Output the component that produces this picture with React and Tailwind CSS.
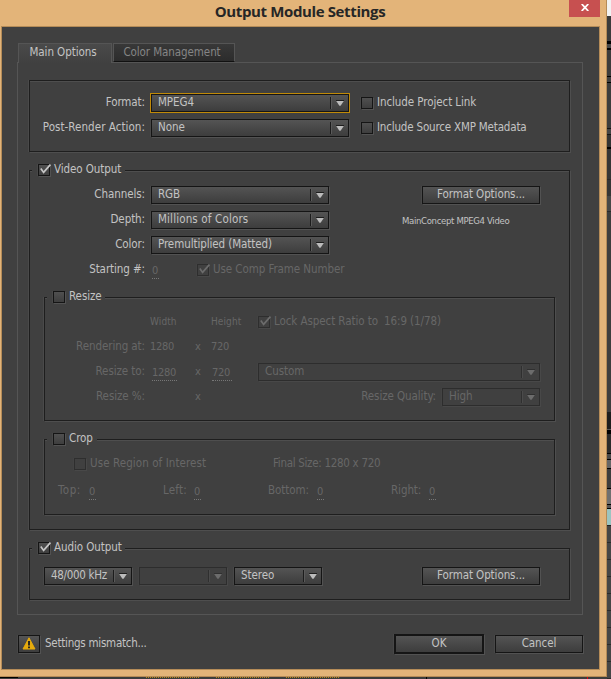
import React from "react"
import clsx from "clsx"

const bezel = "shadow-[1px_1px_0_#525252,-1px_0_0_#484848]"
const bezelOff = "shadow-[1px_1px_0_#484848,-1px_0_0_#434343]"

function Label({ className, children, disabled }) {
  return (
    <span className={clsx("shrink-0 pb-0.5 whitespace-pre", disabled ? "text-[#676767]" : "text-[#c3c3c3]", className)}>
      {children}
    </span>
  )
}

function Checkbox({ checked, disabled, className }) {
  return (
    <span
      className={clsx(
        "relative block h-3 w-3 shrink-0 border",
        disabled ? "border-[#2e2e2e] bg-[#404040]" : "border-[#151515] bg-linear-to-b from-[#505050] to-[#3e3e3e]",
        disabled ? bezelOff : bezel,
        className
      )}
    >
      {checked && (
        <svg viewBox="0 0 12 11" className="absolute -top-px left-0 h-[11px] w-3" fill="none">
          <path d="M1.8 4.6 L4.6 8.4 L11.4 0.6" stroke={disabled ? "#6c6c6c" : "#c6c6c6"} strokeWidth="1.7" />
        </svg>
      )}
    </span>
  )
}

function Select({ value, className, disabled, focused }) {
  return (
    <div
      className={clsx(
        "flex h-[18px] shrink-0 items-center border pl-1.5",
        disabled ? "border-[#2d2d2d] text-[#676767]" : "border-[#151515] bg-linear-to-b from-[#545454] to-[#3d3d3d] text-[#c3c3c3]",
        focused ? "shadow-[0_0_0_1px_#c08a08]" : disabled ? bezelOff : bezel,
        className
      )}
    >
      <span className="flex-1 pb-0.5 whitespace-pre">{value}</span>
      <span className={clsx("h-3 w-0.5 border-l", disabled ? "border-[#2f2f2f] bg-[#4b4b4b]" : "border-[#1c1c1c] bg-[#5a5a5a]")} />
      <svg viewBox="0 0 16 16" className="h-4 w-4 shrink-0">
        <path d="M4 5h8v1h-8z" fill={disabled ? "#303030" : "#1e1e1e"} />
        <path d="M4.2 6h7.6L8.6 10.8h-1.2z" fill={disabled ? "#6c6c6c" : "#bcbcbc"} />
      </svg>
    </div>
  )
}

function Button({ children, className }) {
  return (
    <button
      className={clsx(
        "flex h-[18px] shrink-0 items-center justify-center border border-[#151515] bg-linear-to-b from-[#545454] to-[#3d3d3d] pb-0.5 text-[#c3c3c3]",
        bezel,
        className
      )}
    >
      {children}
    </button>
  )
}

function Group({ title, titleClass, checked, className, children }) {
  return (
    <section
      className={clsx(
        "border border-[#1e1e1e] shadow-[inset_0_1px_0_#4e4e4e,1px_1px_0_#4e4e4e,-1px_0_0_#4a4a4a]",
        className
      )}
    >
      {title && (
        <header className={clsx("relative -mt-[7px] ml-0.5 flex h-3 items-center bg-[#404040] pl-1.5", titleClass)}>
          <Checkbox checked={checked} />
          <Label className="ml-1">{title}</Label>
        </header>
      )}
      {children}
    </section>
  )
}

function Row({ className, children }) {
  return <div className={clsx("flex h-[18px] items-center", className)}>{children}</div>
}

function HotText({ className, children }) {
  return (
    <span className={clsx("mt-1 h-[13px] shrink-0 border-b border-dotted border-[#777] text-[11px] leading-[10px] tracking-[-0.3px] text-[#676767]", className)}>
      {children}
    </span>
  )
}

function TitleBar() {
  return (
    <div className="flex h-[26px]">
      <h1 className="w-[569px] pl-[31px] text-center font-['Open_Sans'] text-[15px] leading-[23px] font-bold tracking-[-0.37px] text-[#262626] font-stretch-normal">
        Output Module Settings
      </h1>
      <button className="flex h-[17px] w-[31px] items-center justify-center bg-[#c75050]">
        <svg viewBox="0 0 8 7" className="-mt-0.5 ml-px h-[7px] w-2">
          <path d="M0.7 0 L7.3 7 M7.3 0 L0.7 7" stroke="#fff" strokeWidth="1.8" />
        </svg>
      </button>
    </div>
  )
}

function FormatGroup() {
  return (
    <Group className="h-[72px] pt-[13px]">
      <Row>
        <Label className="w-[115px] text-right">Format:</Label>
        <Select className="ml-1.5 w-[198px]" value="MPEG4" focused />
        <Checkbox className="ml-3" />
        <Label className="ml-1">Include Project Link</Label>
      </Row>
      <Row className="mt-[7px]">
        <Label className="w-[115px] text-right tracking-[0.05px]">Post-Render Action:</Label>
        <Select className="ml-1.5 w-[198px]" value="None" />
        <Checkbox className="ml-3" />
        <Label className="ml-1 tracking-[-0.18px]">Include Source XMP Metadata</Label>
      </Row>
    </Group>
  )
}

function ResizeGroup() {
  return (
    <Group title="Resize" titleClass="w-[58px]" className="mt-[18px] ml-[14px] h-[124px] w-[511px]">
      <Row className="mt-2.5">
        <Label disabled className="mt-px ml-[105px] w-[61px] pb-0 text-[10px] tracking-[0.1px]">Width</Label>
        <Label disabled className="mt-px w-[47px] pb-0 text-[10px] tracking-[0.1px]">Height</Label>
        <Checkbox checked disabled />
        <Label disabled className="ml-1 w-[110px]">Lock Aspect Ratio to</Label>
        <Label disabled>16:9 (1/78)</Label>
      </Row>
      <Row className="mt-[7px]">
        <Label disabled className="w-[100px] text-right">Rendering at:</Label>
        <Label disabled className="mt-0.5 ml-[5px] w-[45px] pb-0 text-[11px] tracking-[-0.3px]">1280</Label>
        <Label disabled className="mt-0.5 w-[16px] pb-0 text-[11px]">x</Label>
        <Label disabled className="mt-0.5 pb-0 text-[11px] tracking-[-0.3px]">720</Label>
      </Row>
      <Row className="mt-[7px]">
        <Label disabled className="w-[100px] text-right">Resize to:</Label>
        <HotText className="ml-[7px] w-[25px]">1280</HotText>
        <Label disabled className="mt-0.5 ml-[18px] w-[17px] pb-0 text-[11px]">x</Label>
        <HotText className="w-5">720</HotText>
        <Select className="ml-[26px] w-[282px]" value="Custom" disabled />
      </Row>
      <Row className="mt-[7px]">
        <Label disabled className="w-[100px] text-right">Resize %:</Label>
        <Label disabled className="mt-0.5 ml-[50px] w-[16px] pb-0 text-[11px]">x</Label>
        <Label disabled className="w-[225px] text-right">Resize Quality:</Label>
        <Select className="ml-1.5 w-[98px]" value="High" disabled />
      </Row>
    </Group>
  )
}

function CropGroup() {
  return (
    <Group title="Crop" titleClass="w-[50px]" className="mt-[18px] ml-[14px] h-[76px] w-[511px]">
      <Row className="mt-2.5">
        <Checkbox className="ml-[29px]" disabled />
        <Label disabled className="ml-1 w-[183px] tracking-[0.08px]">Use Region of Interest</Label>
        <Label disabled className="tracking-[-0.3px]">Final Size: 1280 x 720</Label>
      </Row>
      <Row className="mt-[9px]">
        <Label disabled className="ml-[13px] w-[31px] tracking-[0.5px]">Top:</Label>
        <HotText className="w-[7px]">0</HotText>
        <Label disabled className="ml-[67px] w-[31px] tracking-[0.2px]">Left:</Label>
        <HotText className="w-[7px]">0</HotText>
        <Label disabled className="ml-[67px] w-[49px]">Bottom:</Label>
        <HotText className="w-[7px]">0</HotText>
        <Label disabled className="ml-[67px] w-[38px]">Right:</Label>
        <HotText className="w-[7px]">0</HotText>
      </Row>
    </Group>
  )
}

function VideoGroup() {
  return (
    <Group title="Video Output" titleClass="w-[93px]" checked className="mt-[18px] h-[360px]">
      <Row className="mt-2.5">
        <Label className="w-[115px] text-right">Channels:</Label>
        <Select className="ml-1.5 w-[178px]" value="RGB" />
        <Button className="ml-[93px] w-[118px]">Format Options...</Button>
      </Row>
      <Row className="mt-[7px]">
        <Label className="w-[115px] text-right">Depth:</Label>
        <Select className="ml-1.5 w-[178px] tracking-[0.15px]" value="Millions of Colors" />
        <Label className="mt-1 ml-[73px] text-[9.5px] tracking-[-0.34px]">MainConcept MPEG4 Video</Label>
      </Row>
      <Row className="mt-[7px]">
        <Label className="w-[115px] text-right">Color:</Label>
        <Select className="ml-1.5 w-[178px]" value="Premultiplied (Matted)" />
      </Row>
      <Row className="mt-[7px]">
        <Label className="w-[115px] text-right">Starting #:</Label>
        <HotText className="ml-[7px] w-[7px]">0</HotText>
        <Checkbox className="ml-[38px]" checked disabled />
        <Label disabled className="ml-1">Use Comp Frame Number</Label>
      </Row>
      <ResizeGroup />
      <CropGroup />
    </Group>
  )
}

function AudioGroup() {
  return (
    <Group title="Audio Output" titleClass="w-[93px]" checked className="mt-[18px] h-[52px]">
      <Row className="mt-[13px] ml-[14px]">
        <Select className="w-[88px] tracking-[-0.3px]" value="48/000 kHz" />
        <Select className="ml-[7px] w-[88px]" value="" disabled />
        <Select className="ml-[7px] w-[88px]" value="Stereo" />
        <Button className="ml-[100px] w-[118px]">Format Options...</Button>
      </Row>
    </Group>
  )
}

function Footer() {
  return (
    <div className="mt-[19px] flex h-5 items-center pl-px">
      <Button className="w-[22px] pb-0">
        <svg viewBox="0 0 14 13" className="mt-px h-[13px] w-[14px]">
          <path d="M7 0.8 L13 12 H1 Z" fill="#e5ab0d" stroke="#e5ab0d" strokeLinejoin="round" />
          <path d="M6 4h2v4.5h-2zM6 9.5h2v1.8h-2z" fill="#2c2a20" />
        </svg>
      </Button>
      <Label className="ml-[5px] w-[349px] tracking-[-0.25px]">Settings mismatch...</Label>
      <Button className="h-5! w-[90px] border-2">OK</Button>
      <Button className="ml-[11px] w-[88px]">Cancel</Button>
    </div>
  )
}

// slivers of the application window behind the dialog: [height, colour class]
const edge = [
  ["h-[16px]", "bg-[#f2f2f2]"],
  ["h-[25px]", "bg-[#3b3b3b]"],
  ["h-[3px]", "bg-black"],
  ["h-[4px]", "bg-[#484848]"],
  ["h-[2px]", "bg-black"],
  ["h-[26px]", "bg-[#3c3c3c]"],
  ["h-px", "bg-black"],
  ["h-[5px]", "bg-[#404040]"],
  ["h-px", "bg-black"],
  ["h-[45px]", "bg-[#3d3d3d]"],
  ["h-px", "bg-[#151515]"],
  ["h-[5px]", "bg-[#454545]"],
  ["h-px", "bg-[#151515]"],
  ["h-[12px]", "bg-[#333]"],
  ["h-0.5", "bg-black"],
  ["h-[30px]", "bg-[#363636]"],
  ["h-px", "bg-[#2a2a2a]"],
  ["h-[16px]", "bg-[#363636]"],
  ["h-[15px]", "bg-[#484848]"],
  ["h-px", "bg-[#2a2a2a]"],
  ["h-[200px]", "bg-[#3e3e3e]"],
  ["h-[17px]", "bg-[#1e1e1e]"],
  ["h-px", "bg-[#585858]"],
  ["h-[4px]", "bg-black"],
  ["h-[19px]", "bg-[#2b2b2b]"],
  ["h-px", "bg-black"],
  ["h-[5px]", "bg-[#484848]"],
  ["h-px", "bg-black"],
  ["h-[8px]", "bg-[#666]"],
  ["h-px", "bg-black"],
  ["h-[19px]", "bg-[#3d3d3d]"],
  ["h-px", "bg-black"],
  ["h-[15px]", "bg-[#707070]"],
  ["h-px", "bg-black"],
  ["h-[3px]", "bg-[#555]"],
  ["h-px", "bg-black"],
  ["h-[16px]", "bg-[#9cc4c0]"],
  ["h-px", "bg-[#222]"],
]

function Backdrop() {
  return (
    <div className="flex w-1 flex-col bg-[#474747]">
      {edge.map(([height, color], i) => (
        <i key={i} className={clsx("block shrink-0", height, color)} />
      ))}
      {[0, 1, 2, 3, 4, 5, 6, 7, 8].map((i) => (
        <i key={i} className="block h-[17px] shrink-0 border-b border-[#2b2b2b] bg-[#464646]" />
      ))}
    </div>
  )
}

export default function App() {
  return (
    <div className="flex h-[679px] w-[611px] overflow-hidden bg-[#3a3a3a] font-['DejaVu_Sans_Condensed','DejaVu_Sans',sans-serif] text-[11.5px] leading-[14px] tracking-[-0.08px] font-stretch-condensed">
      <div className="w-[607px]">
        <div className="h-[677px] border-r border-b border-[#b58c58] bg-[#e3b479]">
          <TitleBar />
          <main className="mr-1.5 ml-px h-[644px] border border-[#b58c58] bg-[#404040] pt-4 pr-[16px] pl-[15px]">
            <nav className="relative flex h-[19px] pl-px">
              <div className="h-5 w-[94px] border border-b-0 border-[#555] bg-linear-to-b from-[#4a4a4a] to-[#404040] pt-px pr-1 text-center text-[#c3c3c3]">
                Main Options
              </div>
              <div className="ml-px h-[19px] w-[122px] border border-[#555] border-b-[#111] bg-linear-to-b from-[#383838] to-[#2c2c2c] pt-px pr-1 text-center text-[#858585]">
                Color Management
              </div>
            </nav>
            <div className="h-[553px] border border-[#555] pt-[17px] pr-3 pl-[11px]">
              <FormatGroup />
              <VideoGroup />
              <AudioGroup />
            </div>
            <Footer />
          </main>
        </div>
        <div className="flex h-0.5 bg-[#3d3d3d]">
          <i className="h-px w-[18px] bg-black" />
          <i className="ml-32 h-0 w-[53px] border-t border-dotted border-[#b98a22]" />
          <i className="ml-[17px] h-0 w-[53px] border-t border-dotted border-[#b98a22]" />
          <i className="ml-[17px] h-0 w-[53px] border-t border-dotted border-[#b98a22]" />
          <i className="ml-[87px] h-0.5 w-px bg-black" />
          <i className="ml-40 h-0.5 w-px bg-red-600" />
        </div>
      </div>
      <Backdrop />
    </div>
  )
}
